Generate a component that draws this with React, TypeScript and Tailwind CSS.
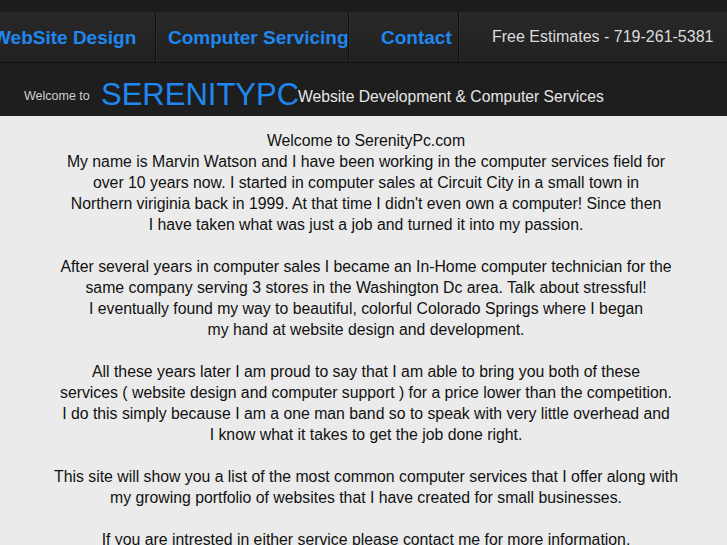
import React from "react";

const paragraphs: string[][] = [
  [
    "Welcome to SerenityPc.com",
    "My name is Marvin Watson and I have been working in the computer services field for",
    "over 10 years now. I started in computer sales at Circuit City in a small town in",
    "Northern viriginia back in 1999. At that time I didn't even own a computer! Since then",
    "I have taken what was just a job and turned it into my passion.",
  ],
  [
    "After several years in computer sales I became an In-Home computer technician for the",
    "same company serving 3 stores in the Washington Dc area. Talk about stressful!",
    "I eventually found my way to beautiful, colorful Colorado Springs where I began",
    "my hand at website design and development.",
  ],
  [
    "All these years later I am proud to say that I am able to bring you both of these",
    "services ( website design and computer support ) for a price lower than the competition.",
    "I do this simply because I am a one man band so to speak with very little overhead and",
    "I know what it takes to get the job done right.",
  ],
  [
    "This site will show you a list of the most common computer services that I offer along with",
    "my growing portfolio of websites that I have created for small businesses.",
  ],
  ["If you are intrested in either service please contact me for more information."],
];

export default function App() {
  return (
    <div className="w-[727px] h-[545px] overflow-hidden bg-[#ebebeb] font-['Liberation_Sans',Arial,sans-serif]">
      {/* top strip */}
      <div className="h-[12px] bg-[#1c1c1c]" />
      {/* nav */}
      <div className="flex h-[51px] bg-gradient-to-b from-[#282828] to-[#212121] border-b border-[#141414] overflow-hidden">
        <div className="w-[156px] shrink-0 flex items-center border-r border-[#0f0f0f]">
          <span className="ml-[-7px] whitespace-nowrap text-[19px] font-bold text-[#1f87f0] leading-none">
            WebSite Design
          </span>
        </div>
        <div className="w-[193px] shrink-0 flex items-center border-l border-[#2e2e2e] border-r border-r-[#0f0f0f] pl-[11px]">
          <span className="whitespace-nowrap text-[19px] font-bold text-[#1f87f0] leading-none">
            Computer Servicing
          </span>
        </div>
        <div className="w-[110px] shrink-0 flex items-center border-l border-[#2e2e2e] border-r border-r-[#0f0f0f] pl-[31px]">
          <span className="whitespace-nowrap text-[19px] font-bold text-[#1f87f0] leading-none">
            Contact
          </span>
        </div>
        <div className="flex-1 flex items-center border-l border-[#2e2e2e] pl-[32px]">
          <span className="whitespace-nowrap text-[16px] text-[#dcdcdc] leading-none">
            Free Estimates - 719-261-5381
          </span>
        </div>
      </div>
      {/* subheader */}
      <div className="flex items-start h-[53px] bg-[#1e1e1e] pl-[24px]">
        <span className="mt-[27px] w-[77px] shrink-0 whitespace-nowrap text-[12.5px] leading-none text-[#cfcfcf]">
          Welcome to
        </span>
        <span className="mt-[16px] w-[197px] shrink-0 whitespace-nowrap text-[31px] leading-none text-[#1f87f0]">
          SERENITYPC
        </span>
        <span className="mt-[26px] whitespace-nowrap text-[15.7px] leading-none text-[#e6e6e6] relative">
          Website Development &amp; Computer Services
        </span>
      </div>
      {/* content */}
      <div className="pt-[14px] pl-[5px] text-center text-[15.8px] leading-[21px] text-[#111111]">
        {paragraphs.map((p, i) => (
          <div key={i} className={i > 0 ? "mt-[21px]" : ""}>
            {p.map((line, j) => (
              <div key={j} className="whitespace-nowrap">
                {line}
              </div>
            ))}
          </div>
        ))}
      </div>
    </div>
  );
}
